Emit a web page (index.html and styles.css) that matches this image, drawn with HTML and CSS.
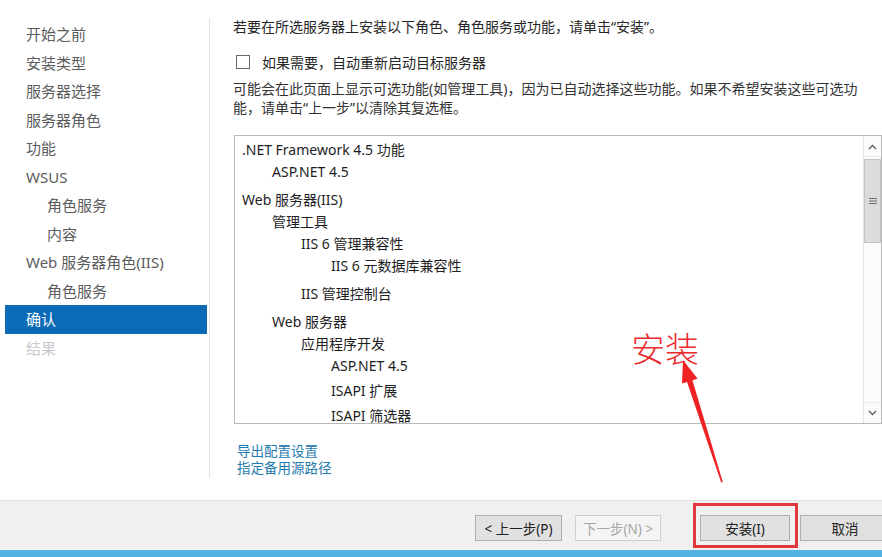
FILE: index.html
```html
<!DOCTYPE html>
<html lang="zh-CN">
<head>
<meta charset="utf-8">
<title>确认安装所选内容</title>
<link rel="stylesheet" href="styles.css">
</head>
<body>
<div class="wizard">
  <nav class="nav">
    <div class="nav-item">开始之前</div>
    <div class="nav-item">安装类型</div>
    <div class="nav-item">服务器选择</div>
    <div class="nav-item">服务器角色</div>
    <div class="nav-item">功能</div>
    <div class="nav-item">WSUS</div>
    <div class="nav-item sub">角色服务</div>
    <div class="nav-item sub">内容</div>
    <div class="nav-item">Web 服务器角色(IIS)</div>
    <div class="nav-item sub">角色服务</div>
    <div class="nav-item active">确认</div>
    <div class="nav-item disabled">结果</div>
  </nav>
  <div class="divider"></div>
  <main class="main">
    <div class="heading">若要在所选服务器上安装以下角色、角色服务或功能，请单击“安装”。</div>
    <label class="check-row"><span class="checkbox"></span><span class="check-label">如果需要，自动重新启动目标服务器</span></label>
    <p class="note">可能会在此页面上显示可选功能(如管理工具)，因为已自动选择这些功能。如果不希望安装这些可选功能，请单击“上一步”以清除其复选框。</p>
    <div class="list">
      <div class="list-content">
        <div class="li l0">.NET Framework 4.5 功能</div>
        <div class="li l1">ASP.NET 4.5</div>
        <div class="li l0 gap">Web 服务器(IIS)</div>
        <div class="li l1">管理工具</div>
        <div class="li l2">IIS 6 管理兼容性</div>
        <div class="li l3">IIS 6 元数据库兼容性</div>
        <div class="li l2 gap">IIS 管理控制台</div>
        <div class="li l1 gap">Web 服务器</div>
        <div class="li l2">应用程序开发</div>
        <div class="li l3">ASP.NET 4.5</div>
        <div class="li l3 small-gap">ISAPI 扩展</div>
        <div class="li l3 small-gap">ISAPI 筛选器</div>
      </div>
      <div class="scrollbar">
        <div class="sb-arrow">
          <svg width="9" height="6" viewBox="0 0 9 6"><path d="M1 5 L4.5 1.5 L8 5" fill="none" stroke="#606060" stroke-width="1.4"/></svg>
        </div>
        <div class="sb-thumb">
          <svg width="8" height="6" viewBox="0 0 8 6"><path d="M0 0.5H8M0 3H8M0 5.5H8" stroke="#707070" stroke-width="1"/></svg>
        </div>
        <div class="sb-track"></div>
        <div class="sb-arrow">
          <svg width="9" height="6" viewBox="0 0 9 6"><path d="M1 1 L4.5 4.5 L8 1" fill="none" stroke="#606060" stroke-width="1.4"/></svg>
        </div>
      </div>
    </div>
    <div class="links">
      <a class="link">导出配置设置</a>
      <a class="link">指定备用源路径</a>
    </div>
  </main>
</div>
<footer class="footer">
  <button class="btn prev">&lt; 上一步(P)</button>
  <button class="btn next" disabled>下一步(N) &gt;</button>
  <button class="btn install">安装(I)</button>
  <button class="btn cancel">取消</button>
</footer>
<div class="taskbar"></div>

<div class="highlight"></div>
<div class="annotation">安装</div>
<svg class="arrow" width="882" height="557" viewBox="0 0 882 557">
  <polygon fill="#ef2323" points="683,360 697.5,378.5 692.5,380.5 722.8,482 721.2,482.5 687,382 682,383.6"/>
</svg>
</body>
</html>
```

FILE: styles.css
```css
html, body {
  margin: 0;
  padding: 0;
}
body {
  width: 882px;
  height: 557px;
  overflow: hidden;
  position: relative;
  background: #ffffff;
  font-family: "Noto Sans", "Noto Sans CJK SC", sans-serif;
  color: #262626;
}

.wizard {
  display: flex;
  height: 500px;
}

.nav {
  width: 202px;
  margin-left: 5px;
  padding-top: 20px;
  flex: none;
}
.nav-item {
  height: 28.5px;
  line-height: 28.5px;
  padding-left: 21px;
  font-size: 15px;
  color: #5c5c5c;
  white-space: nowrap;
}
.nav-item.sub {
  padding-left: 42px;
}
.nav-item.active {
  background: #0b6bb7;
  color: #ffffff;
}
.nav-item.disabled {
  color: #cacaca;
}

.divider {
  width: 1px;
  flex: none;
  margin-left: 2px;
  margin-top: 18px;
  margin-bottom: 22px;
  background: #e2e2e2;
}

.main {
  flex: 1;
  padding-left: 23px;
  min-width: 0;
}
.heading {
  margin-top: 17px;
  line-height: 20px;
  font-size: 14px;
  white-space: nowrap;
}
.check-row {
  display: flex;
  align-items: center;
  margin-top: 15px;
  height: 20px;
  font-size: 14px;
}
.checkbox {
  width: 12px;
  height: 12px;
  margin-left: 3px;
  border: 1px solid #6a6a6a;
  background: #fff;
}
.check-label {
  margin-left: 12px;
}
.note {
  margin: 6.5px 8px 0 0;
  font-size: 14px;
  line-height: 19px;
  color: #333;
}

.list {
  display: flex;
  margin-top: 18.5px;
  margin-left: 1px;
  height: 289px;
  box-sizing: border-box;
  border: 1px solid #b9b9b9;
  background: #fff;
}
.list-content {
  flex: 1;
  padding: 3px 0 0 7px;
  overflow: hidden;
}
.li {
  height: 22px;
  line-height: 22px;
  font-size: 14px;
  color: #1e1e1e;
  white-space: nowrap;
}
.li.l1 { padding-left: 30px; }
.li.l2 { padding-left: 59px; }
.li.l3 { padding-left: 89px; }
.li.gap { margin-top: 6px; }
.li.small-gap { margin-top: 3px; }

.scrollbar {
  width: 17px;
  flex: none;
  display: flex;
  flex-direction: column;
  border-left: 1px solid #e6e6e6;
  background: #fbfbfb;
}
.sb-arrow {
  height: 19px;
  margin-top: 1px;
  display: flex;
  align-items: center;
  justify-content: center;
  border-bottom: 1px solid #ececec;
}
.sb-arrow:last-child {
  border-bottom: none;
  border-top: 1px solid #ececec;
  margin-top: 0;
  margin-bottom: 1px;
}
.sb-thumb {
  height: 84px;
  margin-top: 2px;
  box-sizing: border-box;
  border: 1px solid #c4c4c4;
  background: #dcdcdc;
  display: flex;
  align-items: center;
  justify-content: center;
}
.sb-track {
  flex: 1;
}

.links {
  margin-top: 18.5px;
  display: flex;
  flex-direction: column;
  align-items: flex-start;
  padding-left: 4px;
}
.link {
  font-size: 13.5px;
  line-height: 17px;
  color: #1f7aad;
  text-decoration: none;
}

.footer {
  height: 50px;
  box-sizing: border-box;
  border-top: 1px solid #dedede;
  background: #f0f0f0;
  display: flex;
  align-items: flex-start;
  padding: 14px 0 0 475px;
}
.btn {
  flex: none;
  height: 26px;
  padding: 0;
  font-family: "Noto Sans", "Noto Sans CJK SC", sans-serif;
  font-size: 13.5px;
  color: #202020;
  background: #e1e1e1;
  border: 1px solid #adadad;
  border-radius: 0;
}
.btn.prev { width: 87px; }
.btn.next {
  width: 86px;
  margin-left: 13px;
  background: #f4f4f4;
  border-color: #cfcfcf;
  color: #a6a6a6;
}
.btn.install {
  width: 90px;
  margin-left: 39px;
}
.btn.cancel {
  width: 90px;
  margin-left: 10px;
}

.taskbar {
  height: 7px;
  background: #55b3e3;
}

.highlight {
  position: absolute;
  left: 693px;
  top: 503px;
  width: 105px;
  height: 45px;
  box-sizing: border-box;
  border: 3px solid #e0383d;
}
.annotation {
  position: absolute;
  left: 631px;
  top: 331px;
  font-family: "Noto Sans CJK SC", sans-serif;
  font-size: 34px;
  line-height: 34px;
  color: #ea2a2e;
  font-weight: 300;
}
.arrow {
  position: absolute;
  left: 0;
  top: 0;
  pointer-events: none;
}
```
